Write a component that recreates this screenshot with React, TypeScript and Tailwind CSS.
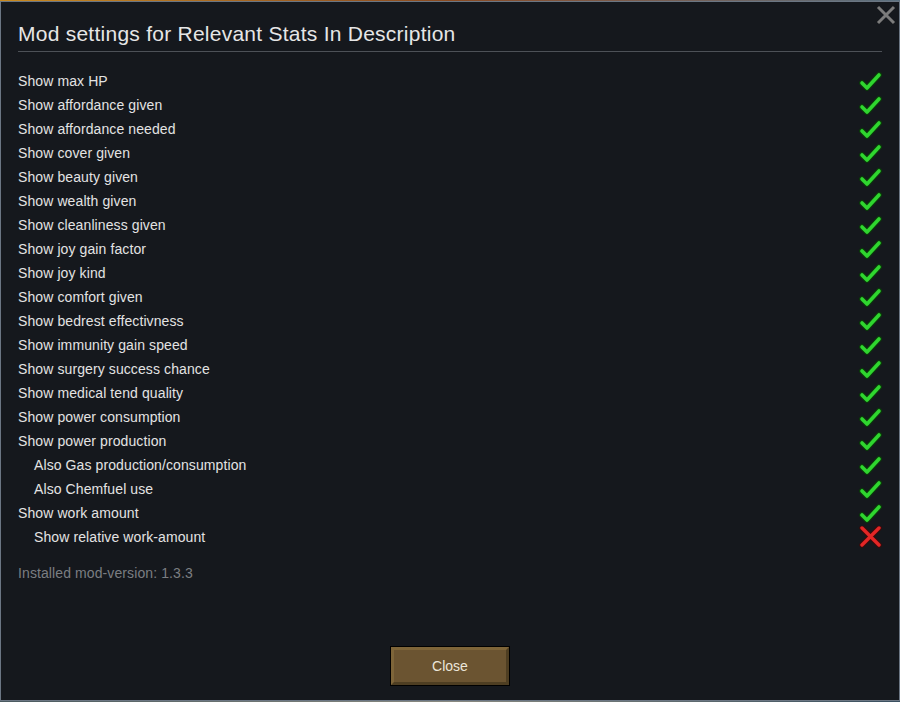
import React from 'react';

type Setting = { label: string; sub?: boolean; on: boolean };

const settings: Setting[] = [
  { label: 'Show max HP', on: true },
  { label: 'Show affordance given', on: true },
  { label: 'Show affordance needed', on: true },
  { label: 'Show cover given', on: true },
  { label: 'Show beauty given', on: true },
  { label: 'Show wealth given', on: true },
  { label: 'Show cleanliness given', on: true },
  { label: 'Show joy gain factor', on: true },
  { label: 'Show joy kind', on: true },
  { label: 'Show comfort given', on: true },
  { label: 'Show bedrest effectivness', on: true },
  { label: 'Show immunity gain speed', on: true },
  { label: 'Show surgery success chance', on: true },
  { label: 'Show medical tend quality', on: true },
  { label: 'Show power consumption', on: true },
  { label: 'Show power production', on: true },
  { label: 'Also Gas production/consumption', sub: true, on: true },
  { label: 'Also Chemfuel use', sub: true, on: true },
  { label: 'Show work amount', on: true },
  { label: 'Show relative work-amount', sub: true, on: false },
];

function Check() {
  return (
    <svg width="24" height="22" viewBox="0 0 24 22">
      <polyline points="4,13 9,18 21,5" fill="none" stroke="#0b3a0b" strokeWidth="6" strokeLinecap="round" strokeLinejoin="round" />
      <polyline points="4,13 9,18 21,5" fill="none" stroke="#2fd62f" strokeWidth="3.6" strokeLinecap="round" strokeLinejoin="round" />
    </svg>
  );
}

function Cross() {
  return (
    <svg width="24" height="22" viewBox="0 0 24 22">
      <path d="M4 2 L21 19 M21 2 L4 19" fill="none" stroke="#3a0b0b" strokeWidth="5.5" strokeLinecap="round" />
      <path d="M4 2 L21 19 M21 2 L4 19" fill="none" stroke="#e32626" strokeWidth="3.4" strokeLinecap="round" />
    </svg>
  );
}

export default function App() {
  return (
    <div className="w-[900px] h-[702px] flex flex-col bg-[#2a3a40] font-['Liberation_Sans',Arial,sans-serif]">
      <div className="h-[1px] bg-gradient-to-r from-[#c98a1e] via-[#8a4a20] to-[#5a7080]" />
      <div className="relative flex-1 flex flex-col border border-[#6b7683] bg-[#15181d] px-[17px] pb-[14px]">
        <button className="absolute right-[3px] top-[3px] w-[20px] h-[20px]">
          <svg width="20" height="20" viewBox="0 0 20 20">
            <path d="M2 2 L18 18 M18 2 L2 18" stroke="#7c7c7c" strokeWidth="3" />
          </svg>
        </button>

        <div className="mt-[20px] border-b border-[#4d5157] pb-[5px]">
          <h1 className="text-[21px] leading-[24px] tracking-[0.25px] text-[#e6e6e6]">
            Mod settings for Relevant Stats In Description
          </h1>
        </div>

        <div className="mt-[17px] flex flex-col">
          {settings.map((s) => (
            <div key={s.label} className="flex h-[24px] items-center justify-between">
              <span className={`text-[14px] tracking-[0.1px] text-[#e3e3e3] ${s.sub ? 'pl-[16px]' : ''}`}>{s.label}</span>
              <span className="mr-[0px]">{s.on ? <Check /> : <Cross />}</span>
            </div>
          ))}
        </div>

        <div className="mt-[12px] h-[24px] flex items-center text-[14px] tracking-[0.1px] text-[#7b7e82]">
          Installed mod-version: 1.3.3
        </div>

        <div className="flex-1" />

        <div className="flex justify-center">
          <button className="w-[120px] h-[40px] border border-black bg-[#6b5431]">
            <div className="h-full w-full border-[3px] border-t-[#7e6539] border-l-[#7e6539] border-b-[#4e3e22] border-r-[#4e3e22] flex items-center justify-center text-[14px] text-[#ece6da]">
              Close
            </div>
          </button>
        </div>
      </div>
      <div className="h-[1px] bg-gradient-to-r from-[#4a5a60] via-[#8a8a80] to-[#3a5060]" />
    </div>
  );
}
